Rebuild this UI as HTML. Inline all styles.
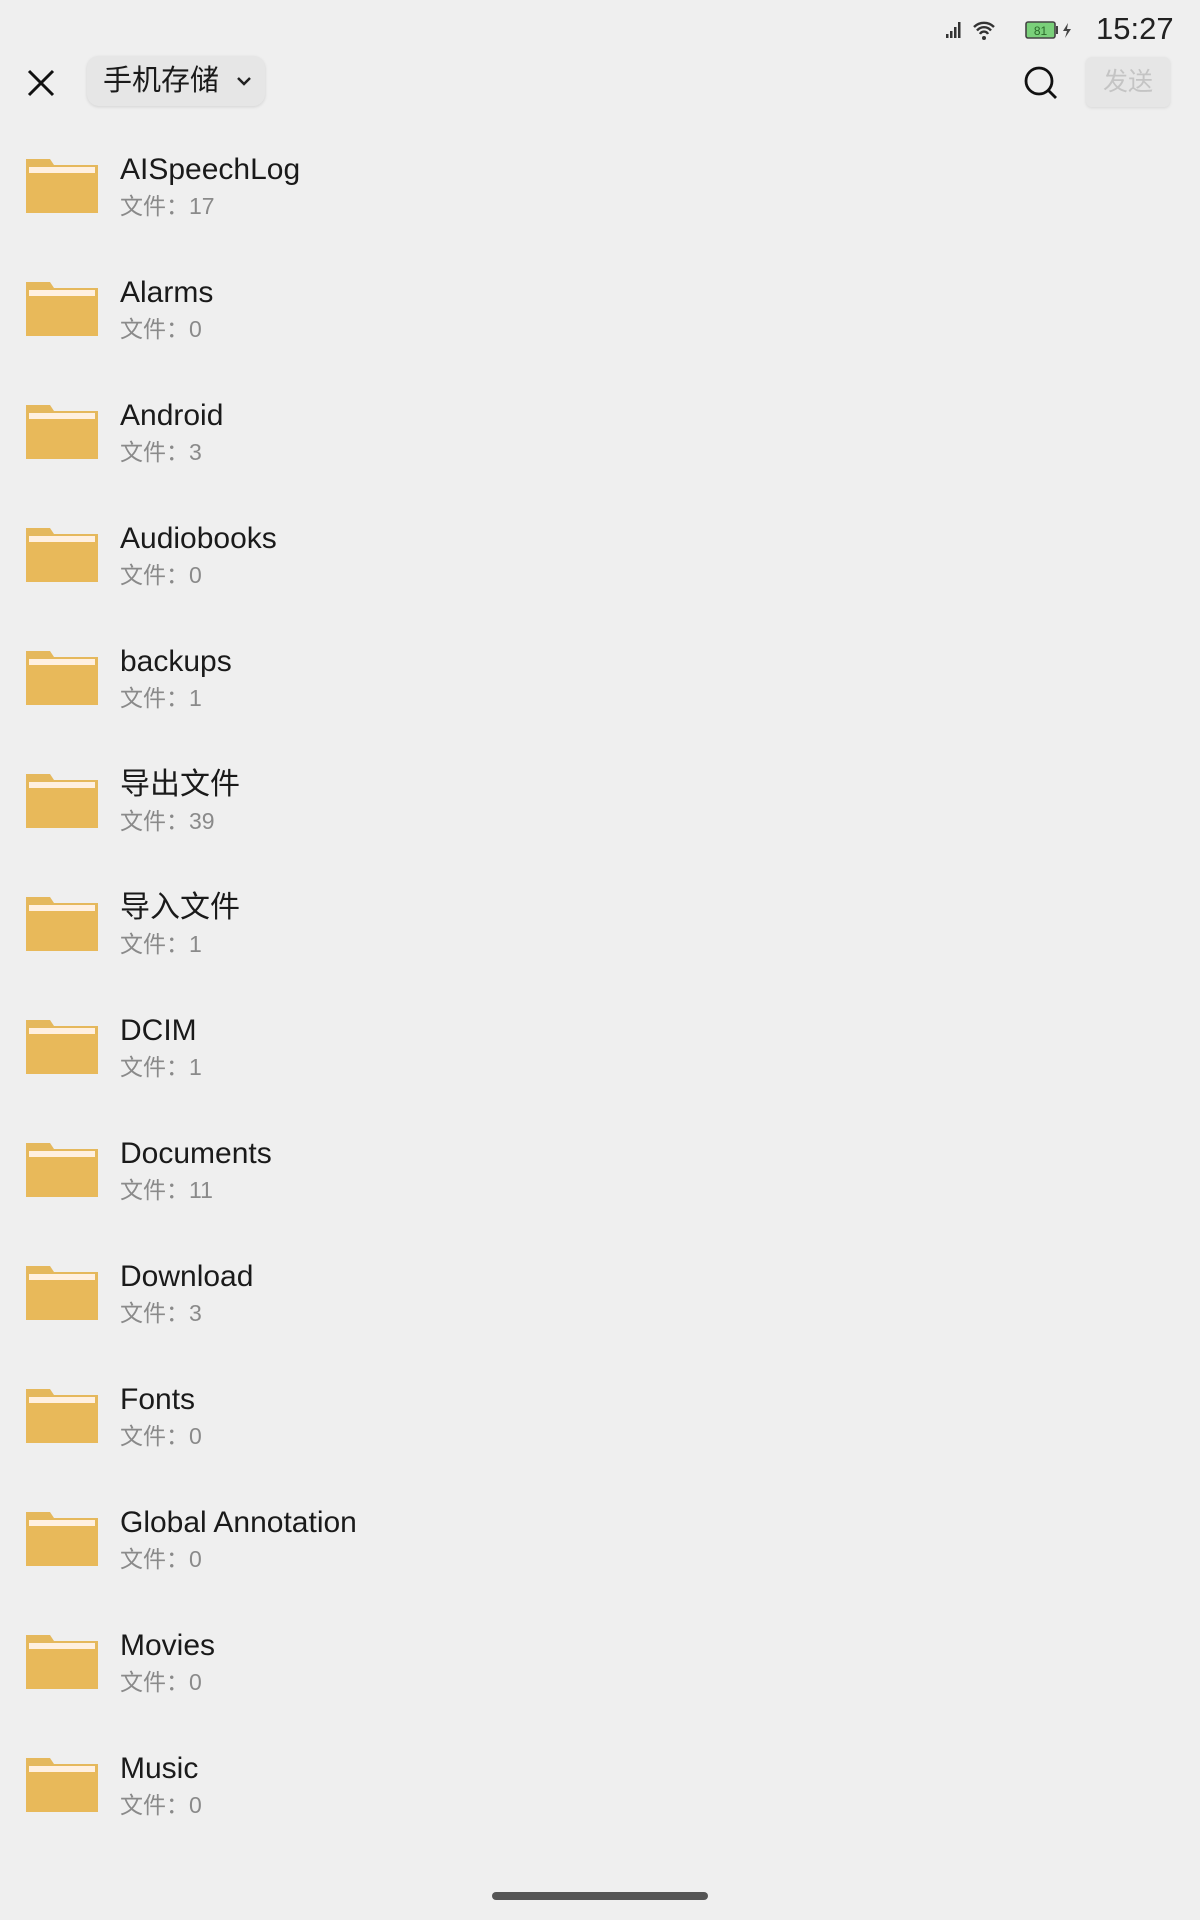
<!DOCTYPE html>
<html><head><meta charset="utf-8"><style>
*{margin:0;padding:0;box-sizing:border-box}
body{width:1200px;height:1920px;background:#efefef;position:relative;overflow:hidden;font-family:"Liberation Sans","Noto Sans CJK SC",sans-serif}
.row{position:absolute;left:0;width:1200px;height:123px}
.fold{position:absolute;left:26px;top:0;width:72px;height:58px}
.t{position:absolute;left:120px;top:-3px;font-size:30px;line-height:36px;color:#1a1a1a}
.s{position:absolute;left:120px;top:37px;font-size:23px;line-height:28px;color:#8a8a8a}
</style></head><body>
<div style="position:absolute;left:1096px;top:12px;font-size:31px;line-height:34px;color:#222">15:27</div>
<svg style="position:absolute;left:944px;top:18px" width="150" height="24" viewBox="0 0 150 24">
<rect x="2" y="16" width="2.5" height="4" fill="#333"/><rect x="6" y="13" width="2.5" height="7" fill="#333"/><rect x="10" y="9" width="2.5" height="11" fill="#333"/><rect x="14" y="4" width="2.5" height="16" fill="#333"/>
<path d="M30 9a14 14 0 0 1 20 0M33 12.5a9 9 0 0 1 14 0M36 16a4.5 4.5 0 0 1 8 0" stroke="#333" stroke-width="2.4" fill="none"/><circle cx="40" cy="20" r="2" fill="#333"/>
<rect x="82" y="4" width="29" height="16" rx="2" fill="#7ad07a" stroke="#444" stroke-width="1.6"/><text x="96.5" y="17" font-size="12" text-anchor="middle" fill="#2a6a2a" font-family="Liberation Sans">81</text>
<rect x="112" y="8" width="2" height="8" fill="#444"/><path d="M124 5l-5 8h4l-2 7 6-9h-4z" fill="#444"/>
</svg>
<svg style="position:absolute;left:26px;top:68px" width="30" height="30"><path d="M3 3L27 27M27 3L3 27" stroke="#111" stroke-width="3"/></svg>
<div style="position:absolute;left:87px;top:56px;width:178px;height:50px;background:#e6e6e6;border-radius:12px;box-shadow:0 1px 3px rgba(0,0,0,.12)"></div>
<div style="position:absolute;left:103px;top:63px;font-size:29px;line-height:36px;color:#1a1a1a">手机存储</div>
<svg style="position:absolute;left:235px;top:74px" width="18" height="14"><path d="M3 4l6 6 6-6" stroke="#222" stroke-width="2.5" fill="none"/></svg>
<svg style="position:absolute;left:1022px;top:64px" width="38" height="38"><circle cx="17" cy="17" r="13" stroke="#111" stroke-width="2.8" fill="none"/><path d="M26.5 26.5L34 34" stroke="#111" stroke-width="2.8"/></svg>
<div style="position:absolute;left:1086px;top:57px;width:84px;height:50px;background:#e6e6e6;border-radius:6px;box-shadow:0 1px 3px rgba(0,0,0,.1);color:#c4c4c4;font-size:25px;line-height:50px;text-align:center">发送</div>

<svg width="0" height="0" style="position:absolute"><defs><g id="f"><path d="M0 4h24l4 6h44v48H0z" fill="#e5b85c"/><rect x="3" y="12" width="66" height="6" fill="#fff0e0"/><rect x="0" y="18" width="72" height="40" fill="#e8b95a"/></g></defs></svg>

<div class="row" style="top:155px"><svg class="fold" viewBox="0 0 72 58"><use href="#f"/></svg><div class="t">AISpeechLog</div><div class="s">文件：17</div></div>
<div class="row" style="top:278px"><svg class="fold" viewBox="0 0 72 58"><use href="#f"/></svg><div class="t">Alarms</div><div class="s">文件：0</div></div>
<div class="row" style="top:401px"><svg class="fold" viewBox="0 0 72 58"><use href="#f"/></svg><div class="t">Android</div><div class="s">文件：3</div></div>
<div class="row" style="top:524px"><svg class="fold" viewBox="0 0 72 58"><use href="#f"/></svg><div class="t">Audiobooks</div><div class="s">文件：0</div></div>
<div class="row" style="top:647px"><svg class="fold" viewBox="0 0 72 58"><use href="#f"/></svg><div class="t">backups</div><div class="s">文件：1</div></div>
<div class="row" style="top:770px"><svg class="fold" viewBox="0 0 72 58"><use href="#f"/></svg><div class="t">导出文件</div><div class="s">文件：39</div></div>
<div class="row" style="top:893px"><svg class="fold" viewBox="0 0 72 58"><use href="#f"/></svg><div class="t">导入文件</div><div class="s">文件：1</div></div>
<div class="row" style="top:1016px"><svg class="fold" viewBox="0 0 72 58"><use href="#f"/></svg><div class="t">DCIM</div><div class="s">文件：1</div></div>
<div class="row" style="top:1139px"><svg class="fold" viewBox="0 0 72 58"><use href="#f"/></svg><div class="t">Documents</div><div class="s">文件：11</div></div>
<div class="row" style="top:1262px"><svg class="fold" viewBox="0 0 72 58"><use href="#f"/></svg><div class="t">Download</div><div class="s">文件：3</div></div>
<div class="row" style="top:1385px"><svg class="fold" viewBox="0 0 72 58"><use href="#f"/></svg><div class="t">Fonts</div><div class="s">文件：0</div></div>
<div class="row" style="top:1508px"><svg class="fold" viewBox="0 0 72 58"><use href="#f"/></svg><div class="t">Global Annotation</div><div class="s">文件：0</div></div>
<div class="row" style="top:1631px"><svg class="fold" viewBox="0 0 72 58"><use href="#f"/></svg><div class="t">Movies</div><div class="s">文件：0</div></div>
<div class="row" style="top:1754px"><svg class="fold" viewBox="0 0 72 58"><use href="#f"/></svg><div class="t">Music</div><div class="s">文件：0</div></div>

<div style="position:absolute;left:492px;top:1892px;width:216px;height:8px;border-radius:4px;background:#555"></div>
</body></html>
